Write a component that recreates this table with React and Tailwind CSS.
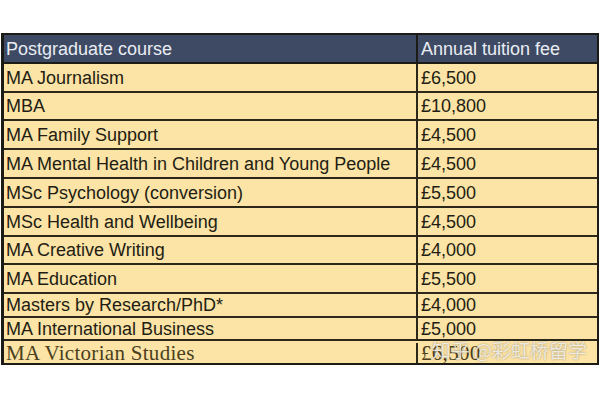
import React from 'react';

// Course fee rows; last row is set in a serif face as in the source sheet
const rows = [
  { course: 'MA Journalism', fee: '£6,500', h: 'h-[29px]' },
  { course: 'MBA', fee: '£10,800', h: 'h-[28px]' },
  { course: 'MA Family Support', fee: '£4,500', h: 'h-[29px]' },
  { course: 'MA Mental Health in Children and Young People', fee: '£4,500', h: 'h-[29px]' },
  { course: 'MSc Psychology (conversion)', fee: '£5,500', h: 'h-[29px]' },
  { course: 'MSc Health and Wellbeing', fee: '£4,500', h: 'h-[29px]' },
  { course: 'MA Creative Writing', fee: '£4,000', h: 'h-[28px]' },
  { course: 'MA Education', fee: '£5,500', h: 'h-[29px]' },
  { course: 'Masters by Research/PhD*', fee: '£4,000', h: 'h-[24px]' },
  { course: 'MA International Business', fee: '£5,000', h: 'h-[23px]' },
  { course: 'MA Victorian Studies', fee: '£6,500', h: 'h-[22px]', serif: true },
];

const App = () => {
  return (
    <div className="w-[600px] h-[400px] bg-white pt-[33px] pl-[1px] font-['Liberation_Sans',Arial,sans-serif]">
      <div className="relative w-[598px] border-2 border-l-[3px] border-[#1d1b15]">
        {/* Header */}
        <div className="flex h-[29px] bg-[#3e4a64] border-b-2 border-[#1d1b15] text-[#e9edf3] text-[18px] leading-none">
          <div className="w-[414px] flex items-center pl-[2px] border-r-2 border-[#1d1b15]">Postgraduate course</div>
          <div className="flex-1 flex items-center pl-[3px]">Annual tuition fee</div>
        </div>

        {rows.map((row, i) => (
          <div
            key={row.course}
            className={`flex ${row.h} bg-[#fce3a6] leading-none ${
              i < rows.length - 1 ? 'border-b-2 border-[#2c2819]' : ''
            } ${row.serif ? "font-['Liberation_Serif',serif] text-[21px] tracking-[0.3px] text-[#4a3f20] pt-[2px]" : 'text-[18px] text-[#221d12]'}`}
          >
            <div className="w-[414px] flex items-center pl-[2px] border-r-2 border-[#2c2819]">{row.course}</div>
            <div className="flex-1 flex items-center pl-[3px]">{row.fee}</div>
          </div>
        ))}

        {/* Watermark */}
        <div className="absolute right-[10px] bottom-[4px] text-[19px] leading-none text-white/75 [text-shadow:0_0_2px_rgba(90,80,60,0.6)] font-['Noto_Sans_CJK_SC',sans-serif] pointer-events-none">
          知乎 @彩虹桥留学
        </div>
      </div>
    </div>
  );
};

export default App;
